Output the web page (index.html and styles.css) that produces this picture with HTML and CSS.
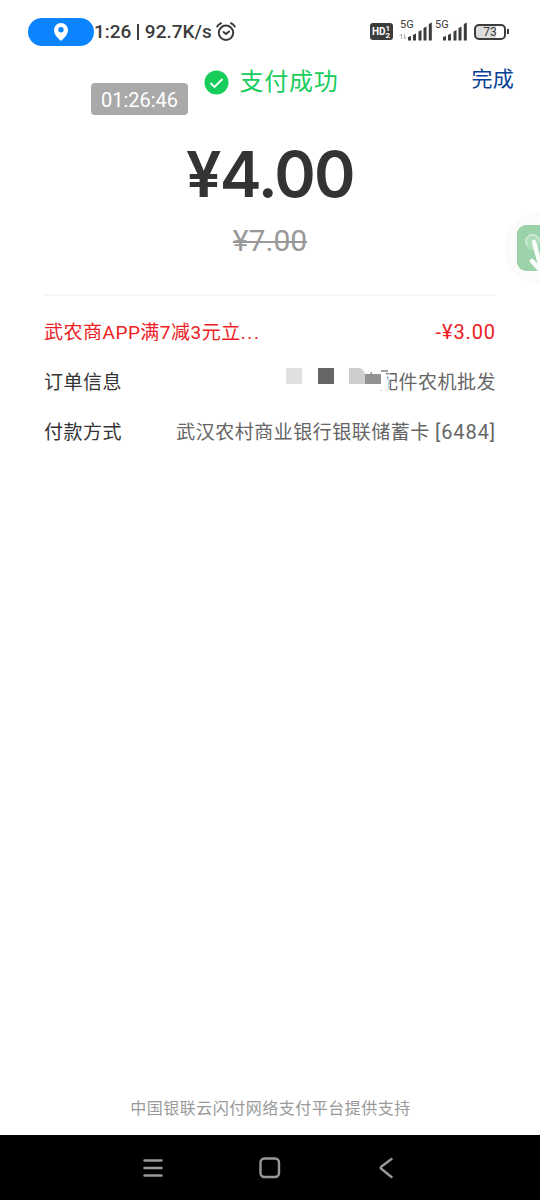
FILE: index.html
```
<!DOCTYPE html>
<html lang="zh-CN">
<head>
    <meta charset="UTF-8">
    <meta name="viewport" content="width=device-width, initial-scale=1.0">
    <title>支付成功</title>
    <link rel="stylesheet" href="styles.css">
</head>
<body>
    <div class="screen">
        <div class="status">
            <div class="pill">
                <svg width="16" height="20" viewBox="0 0 16 20"><path d="M8 1a7 7 0 0 0-7 7c0 5 4.500 8.500 7 11 2.500-2.500 7-6 7-11a7 7 0 0 0-7-7z" fill="#fff"/><circle cx="8" cy="7.800" r="2.700" fill="#0b84ff"/></svg>
            </div>
            <span class="clock">1:26 <em></em> 92.7K/s</span>
            <svg class="alarm" width="20" height="20" viewBox="0 0 20 20" fill="none" stroke="#3c3c3c" stroke-width="2" stroke-linecap="round" stroke-linejoin="round"><circle cx="10" cy="10.800" r="7.200"/><path d="M7.500 10l2.500 2 3-2.500M1.200 4.500Q2.800 2 5 1.200M15 1.200Q17.200 2 18.800 4.500"/></svg>
            <div class="signals">
                <span class="hd">HD<span class="sims"><i>1</i><i>2</i></span></span>
                <span class="net">
                    <b>5G</b>
                    <svg width="33" height="19" viewBox="0 0 33 19"><path d="M2.500 12v5M.5 14l2-2M5.500 12v5M7.500 15l-2 2" stroke="#b5b5b5" fill="none"/><path d="M9 18.500v-3.500l3-1v4.500zM14 18.500v-5.500l3-1.500v7zM19.500 18.500v-9l3-1.500v10.500zM24.500 18.500v-12.500l3-1.500v14zM29.800 18.500v-16.500l3-1.500v18z" fill="#3c3c3c"/></svg>
                </span>
                <span class="net second">
                    <b>5G</b>
                    <svg width="33" height="19" viewBox="0 0 33 19"><path d="M9 18.500v-3.500l3-1v4.500zM14 18.500v-5.500l3-1.500v7zM19.500 18.500v-9l3-1.500v10.500zM24.500 18.500v-12.500l3-1.500v14zM29.800 18.500v-16.500l3-1.500v18z" fill="#3c3c3c"/></svg>
                </span>
                <span class="battery">73</span>
                <span class="cap"></span>
            </div>
        </div>

        <div class="header">
            <div class="result">
                <svg width="25" height="25" viewBox="0 0 25 25"><circle cx="12.500" cy="12.500" r="12" fill="#17cd5c"/><path d="M6.500 13l4 4 8-8" fill="none" stroke="#fff" stroke-width="1.800"/></svg>
                <span>支付成功</span>
            </div>
            <span class="done">完成</span>
            <span class="timer">01:26:46</span>
        </div>

        <div class="amount">¥4.00</div>
        <div class="origin"><span>¥7.00</span></div>

        <div class="list">
            <div class="row red"><span>武农商APP满7减3元立<span class="dots">...</span></span><span class="minus">-¥3.00</span></div>
            <div class="row">
                <span>订单信息</span>
                <span class="value">
                    配件农机批发
                    <!-- masked part of the shop name -->
                    <svg class="mask" width="104" height="28" viewBox="0 0 104 28"><path d="M93 0h7v6l3 10v10H93z" fill="#fff"/><path d="M96 7h7" stroke="#777" stroke-width="1.400"/><path d="M1 4h16v16H1z" fill="#dfdfdf"/><path d="M33 4h16v16H33z" fill="#666"/><path d="M64 4h10q5 1 6 6v10H64z" fill="#cecece"/><path d="M80 10h5l1-2h1v2h9v10H80z" fill="#929292"/></svg>
                </span>
            </div>
            <div class="row"><span>付款方式</span><span class="value">武汉农村商业银行银联储蓄卡 <span class="card">[6484]</span></span></div>
        </div>

        <div class="support">中国银联云闪付网络支付平台提供支持</div>

        <div class="nav">
            <svg width="20" height="20" viewBox="0 0 20 20"><path d="M1.500 2.500h17M1.500 10h17M1.500 17.500h17"/></svg>
            <svg width="22" height="22" viewBox="0 0 22 22"><rect x="1.500" y="1.500" width="18.500" height="18.500" rx="4"/></svg>
            <svg width="14" height="22" viewBox="0 0 14 22"><path d="M12.500 2L2.200 9.800q-1 1 0 2L12.500 20"/></svg>
        </div>

        <div class="float">
            <svg width="34" height="74" viewBox="0 0 34 74">
                <circle cx="35" cy="37" r="35" fill="#fcfcfc" stroke="#f9f9f9" stroke-width="1.500"/>
                <rect x="11" y="14" width="46" height="46" rx="9" fill="#9bd2aa"/>
                <circle cx="27" cy="31" r="8" fill="#acdcb8"/>
                <path d="M22 35a6.500 6.500 0 1 1 11-5" fill="none" stroke="#d3ecd9" stroke-width="1.500"/>
                <path d="M28 31l6 22M26 50l8 9" fill="none" stroke="#fbfdfb" stroke-width="4.500" stroke-linecap="round"/>
            </svg>
        </div>
    </div>
</body>
</html>
```

FILE: styles.css
```
* {margin: 0; padding: 0; box-sizing: border-box;}
body {font-family: Roboto, "Noto Sans CJK SC", sans-serif; background: #fff; color: #333;}
svg {display: block; flex: none;}
.screen {position: relative; width: 540px; height: 1200px; display: flex; flex-direction: column; overflow: hidden;}

.status {height: 62px; padding: 1px 31px 0 28px; display: flex; align-items: center; color: #3c3c3c;}
.pill {width: 66px; height: 28px; border-radius: 14px; background: #0b84ff; display: flex; align-items: center; justify-content: center;}
.clock {width: 122px; padding-top: 1px; font-size: 19px; font-weight: 500; line-height: 28px; white-space: nowrap;}
.clock em {display: inline-block; width: 2px; height: 16px; margin: 0 1px; background: #3c3c3c; vertical-align: -2px;}
.signals {margin-left: auto; display: flex; align-items: center;}
.hd {width: 23px; height: 17px; border-radius: 3px; background: #3c3c3c; color: #fff; font-size: 10px; font-weight: 700; display: flex; align-items: center; padding-left: 2px;}
.sims {display: flex; flex-direction: column; font-size: 8px; line-height: 7px;}
.sims i {font-style: normal;}
.net {position: relative; margin-left: 6px;}
.net b {position: absolute; top: -4px; left: 1px; font-size: 11px; line-height: 14px; font-weight: 400;}
.net.second {margin-left: 2px;}
.battery {width: 32px; height: 16px; margin-left: 7px; border: 2px solid #3c3c3c; border-radius: 5px; background: linear-gradient(90deg, #ddd 70%, #fff 70%); font-size: 12px; line-height: 13px; text-align: center;}
.cap {width: 2px; height: 5px; margin-left: 1px; background: #3c3c3c;}

.header {position: relative; height: 72px; display: flex; justify-content: center;}
.result {display: flex; height: 40px; align-items: center; gap: 11px; padding-left: 2px; font-size: 24px; letter-spacing: 0.7px; color: #17cd5c;}
.result span {line-height: 36px; margin-top: -1px;}
.done {position: absolute; right: 26px; top: 1px; font-size: 21px; line-height: 32px; letter-spacing: 0.3px; color: #063f94;}
.timer {position: absolute; left: 91px; top: 21px; width: 97px; height: 32px; border-radius: 4px; background: #a9a9a9; color: #fff; font-size: 20px; line-height: 34px; text-align: center;}

.amount {height: 80px; font-family: Inter, sans-serif; font-size: 63px; font-weight: 600; line-height: 80px; text-align: center; letter-spacing: -1.8px;}
.origin {height: 80px; padding-top: 7px; font-size: 30px; font-weight: 400; line-height: 40px; text-align: center; color: #999;}
.origin span {text-decoration: line-through; text-decoration-thickness: 2px;}

.list {margin: 0 44px; padding-top: 11px; border-top: 2px solid #f7f7f7;}
.row {height: 50px; display: flex; justify-content: space-between; font-size: 19px; line-height: 51px; letter-spacing: 0.5px; white-space: nowrap;}
.row.red {color: #ed1c24;}
.dots {letter-spacing: 1.6px;}
.minus {font-size: 20px; letter-spacing: 0.9px;}
.value {position: relative; color: #666;}
.card {font-size: 20px; letter-spacing: 0.9px;}
.mask {position: absolute; right: 107px; top: 7px;}

.support {margin-top: auto; height: 55px; padding-left: 1px; font-size: 16px; line-height: 57px; text-align: center; letter-spacing: 0.5px; color: #999;}
.nav {height: 65px; padding: 0 147px 0 143px; background: #000; display: flex; align-items: center; justify-content: space-between;}
.nav svg {fill: none; stroke: #999; stroke-width: 2.4; stroke-linecap: round; stroke-linejoin: round;}
.nav svg:nth-child(2) {margin-right: 2px;}
.float {position: absolute; top: 211px; right: 0;}
```
